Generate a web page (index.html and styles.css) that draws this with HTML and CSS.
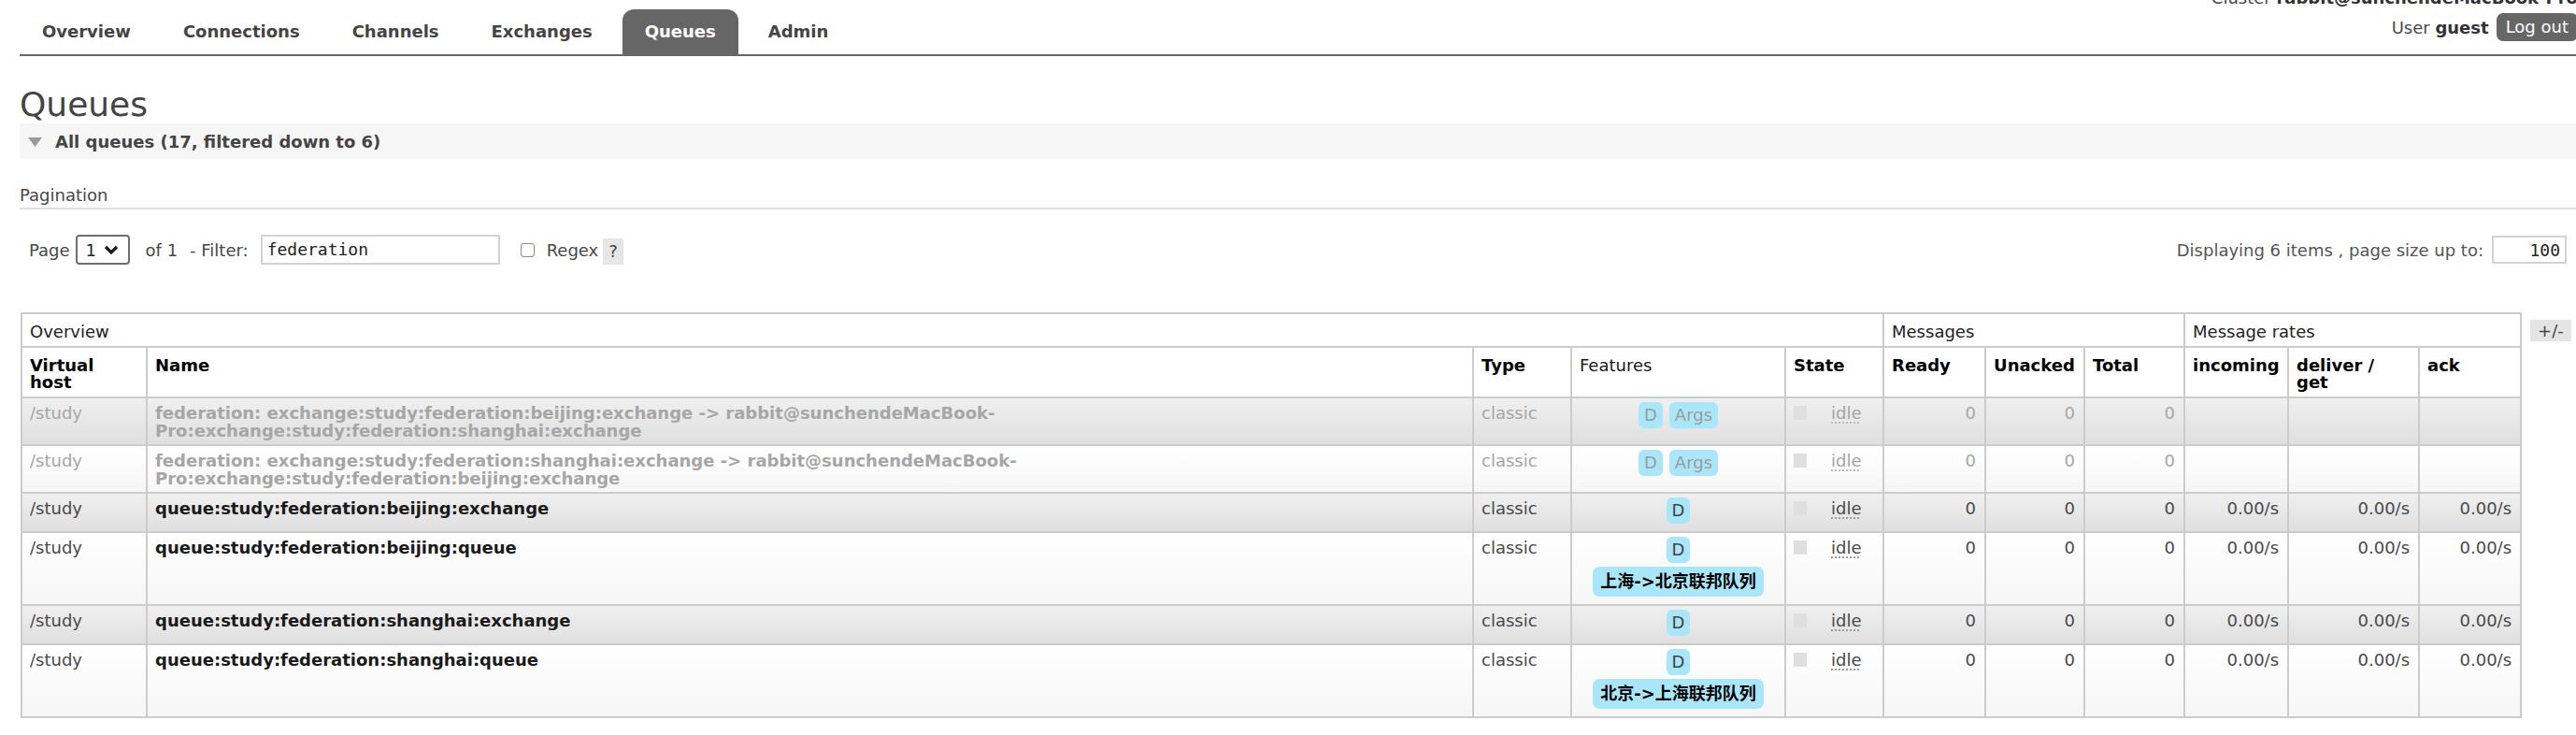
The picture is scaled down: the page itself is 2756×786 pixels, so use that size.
FILE: index.html
```html
<!DOCTYPE html>
<html lang="en">
<head>
<meta charset="utf-8">
<title>RabbitMQ Management: Queues</title>
<link rel="stylesheet" href="styles.css">
</head>
<body>
<div class="page">
  <header class="header">
    <nav class="menu">
      <a href="#">Overview</a>
      <a href="#">Connections</a>
      <a href="#">Channels</a>
      <a href="#">Exchanges</a>
      <a href="#" class="selected">Queues</a>
      <a href="#">Admin</a>
    </nav>
    <div class="topnav">
      <div class="cluster">Cluster <b>rabbit@sunchendeMacBook-Pro</b></div>
      <div class="user">User&nbsp;<b>guest</b><span class="logout">Log out</span></div>
    </div>
  </header>

  <h1 class="title">Queues</h1>

  <div class="section-head">
    <svg class="tri" width="15" height="10" viewBox="0 0 15 10"><polygon points="0,0 15,0 7.5,10" fill="#9a9a9a"/></svg>
    <span>All queues (17, filtered down to 6)</span>
  </div>

  <h3 class="pag-title">Pagination</h3>

  <div class="pager">
    <span class="lbl-page">Page</span>
    <span class="select"><span class="sel-val">1</span><svg width="16" height="11" viewBox="0 0 16 11"><polyline points="2,2 8,8 14,2" fill="none" stroke="#1a1a1a" stroke-width="3.2" stroke-linejoin="miter"/></svg></span>
    <span class="lbl-of">of 1</span>
    <span class="lbl-filter">- Filter:</span>
    <span class="input filter">federation</span>
    <span class="cb"></span>
    <span class="lbl-regex">Regex</span>
    <span class="help">?</span>
    <div class="pager-right">
      <span class="displaying">Displaying 6 items , page size up to:</span>
      <span class="input size">100</span>
    </div>
  </div>

  <table class="list">
    <colgroup>
      <col class="c-vhost"><col class="c-name"><col class="c-type"><col class="c-feat"><col class="c-state">
      <col class="c-ready"><col class="c-unacked"><col class="c-total">
      <col class="c-in"><col class="c-deliver"><col class="c-ack"><col class="c-pm">
    </colgroup>
    <thead>
      <tr>
        <th colspan="5" class="group">Overview</th>
        <th colspan="3" class="group">Messages</th>
        <th colspan="3" class="group">Message rates</th>
        <th class="plus-minus"><span class="pm">+/-</span></th>
      </tr>
      <tr>
        <th class="b">Virtual<br>host</th>
        <th class="b">Name</th>
        <th class="b">Type</th>
        <th>Features</th>
        <th class="b">State</th>
        <th class="b">Ready</th>
        <th class="b">Unacked</th>
        <th class="b">Total</th>
        <th class="b">incoming</th>
        <th class="b">deliver /<br>get</th>
        <th class="b">ack</th>
      </tr>
    </thead>
    <tbody>
      <tr class="alt1 muted">
        <td>/study</td>
        <td class="name">federation: exchange:study:federation:beijing:exchange -&gt; rabbit@sunchendeMacBook-<br>Pro:exchange:study:federation:shanghai:exchange</td>
        <td>classic</td>
        <td class="feat"><div class="badges"><span class="badge">D</span><span class="badge">Args</span></div></td>
        <td><div class="state"><span class="sq"></span><span class="idle">idle</span></div></td>
        <td class="r">0</td><td class="r">0</td><td class="r">0</td>
        <td class="r"></td><td class="r"></td><td class="r"></td>
      </tr>
      <tr class="alt2 muted">
        <td>/study</td>
        <td class="name">federation: exchange:study:federation:shanghai:exchange -&gt; rabbit@sunchendeMacBook-<br>Pro:exchange:study:federation:beijing:exchange</td>
        <td>classic</td>
        <td class="feat"><div class="badges"><span class="badge">D</span><span class="badge">Args</span></div></td>
        <td><div class="state"><span class="sq"></span><span class="idle">idle</span></div></td>
        <td class="r">0</td><td class="r">0</td><td class="r">0</td>
        <td class="r"></td><td class="r"></td><td class="r"></td>
      </tr>
      <tr class="alt1">
        <td>/study</td>
        <td class="name">queue:study:federation:beijing:exchange</td>
        <td>classic</td>
        <td class="feat"><div class="badges"><span class="badge">D</span></div></td>
        <td><div class="state"><span class="sq"></span><span class="idle">idle</span></div></td>
        <td class="r">0</td><td class="r">0</td><td class="r">0</td>
        <td class="r">0.00/s</td><td class="r">0.00/s</td><td class="r">0.00/s</td>
      </tr>
      <tr class="alt2">
        <td>/study</td>
        <td class="name">queue:study:federation:beijing:queue</td>
        <td>classic</td>
        <td class="feat"><div class="badges"><span class="badge">D</span></div><div class="labels"><span class="label">上海-&gt;北京联邦队列</span></div></td>
        <td><div class="state"><span class="sq"></span><span class="idle">idle</span></div></td>
        <td class="r">0</td><td class="r">0</td><td class="r">0</td>
        <td class="r">0.00/s</td><td class="r">0.00/s</td><td class="r">0.00/s</td>
      </tr>
      <tr class="alt1">
        <td>/study</td>
        <td class="name">queue:study:federation:shanghai:exchange</td>
        <td>classic</td>
        <td class="feat"><div class="badges"><span class="badge">D</span></div></td>
        <td><div class="state"><span class="sq"></span><span class="idle">idle</span></div></td>
        <td class="r">0</td><td class="r">0</td><td class="r">0</td>
        <td class="r">0.00/s</td><td class="r">0.00/s</td><td class="r">0.00/s</td>
      </tr>
      <tr class="alt2">
        <td>/study</td>
        <td class="name">queue:study:federation:shanghai:queue</td>
        <td>classic</td>
        <td class="feat"><div class="badges"><span class="badge">D</span></div><div class="labels"><span class="label">北京-&gt;上海联邦队列</span></div></td>
        <td><div class="state"><span class="sq"></span><span class="idle">idle</span></div></td>
        <td class="r">0</td><td class="r">0</td><td class="r">0</td>
        <td class="r">0.00/s</td><td class="r">0.00/s</td><td class="r">0.00/s</td>
      </tr>
    </tbody>
  </table>
</div>
</body>
</html>
```

FILE: styles.css
```css
html, body {
  margin: 0;
  padding: 0;
  overflow: hidden;
  background: #fff;
}
body {
  width: 2756px;
  font-family: "DejaVu Sans", Verdana, sans-serif;
  font-size: 18px;
  line-height: 21px;
  color: #484848;
}
.page {
  padding: 0 8px 0 21px;
}

/* header */
.header {
  display: flex;
  align-items: flex-start;
  justify-content: space-between;
  border-bottom: 2px solid #666;
  margin-right: -8px;
}
.menu {
  display: flex;
  padding-top: 10px;
}
.menu a {
  display: block;
  padding: 13px 24px;
  line-height: 22px;
  margin-right: 8px;
  font-weight: bold;
  color: #444;
  text-decoration: none;
}
.menu a.selected {
  background: #666;
  color: #fff;
  border-radius: 12px 12px 0 0;
}
.topnav {
  margin-top: -13px;
  margin-right: -2px;
  display: flex;
  flex-direction: column;
  align-items: flex-end;
  color: #484848;
}
.cluster {
  line-height: 21px;
  margin-bottom: 6px;
  white-space: nowrap;
}
.cluster b, .user b {
  color: #333;
}
.user {
  display: flex;
  align-items: center;
  white-space: nowrap;
}
.logout {
  display: inline-block;
  margin-left: 8px;
  padding: 4px 10px 5px;
  line-height: 21px;
  background: #666;
  color: #fff;
  border-radius: 7px;
}

/* title + section */
.title {
  margin: 32px 0 0;
  font-size: 36px;
  line-height: 40px;
  font-weight: normal;
  color: #444;
}
.section-head {
  display: flex;
  align-items: center;
  margin-right: -8px;
  padding: 9px 0 8px;
  background: #f6f6f6;
  font-weight: bold;
  color: #444;
}
.section-head .tri {
  margin: 0 14px 0 9px;
}
.pag-title {
  margin: 28px -8px 0 0;
  padding-bottom: 3px;
  border-bottom: 2px solid #dfdfdf;
  font-size: 18px;
  font-weight: normal;
  line-height: 21px;
  color: #484848;
}

/* pager */
.pager {
  display: flex;
  align-items: center;
  margin-top: 27px;
  height: 32px;
}
.lbl-page { margin-left: 10px; }
.select {
  box-sizing: border-box;
  display: flex;
  align-items: center;
  margin-left: 6px;
  width: 58px;
  height: 32px;
  border: 2px solid #6e6e6e;
  border-radius: 4px;
  padding-left: 9px;
  color: #222;
}
.select svg { margin-left: 8px; }
.lbl-of { margin-left: 17px; }
.lbl-filter { margin-left: 13px; }
.input {
  box-sizing: border-box;
  height: 32px;
  border: 2px solid #d2d2d2;
  font-family: "DejaVu Sans Mono", "Liberation Mono", monospace;
  font-size: 18px;
  line-height: 28px;
  color: #222;
}
.filter {
  margin-left: 13px;
  width: 256px;
  padding-left: 5px;
}
.cb {
  box-sizing: border-box;
  margin-left: 22px;
  width: 15px;
  height: 15px;
  border: 1.5px solid #8a8a8a;
  border-radius: 3px;
  background: #fff;
}
.lbl-regex { margin-left: 13px; }
.help {
  margin-left: 5px;
  padding: 0 6px;
  height: 28px;
  line-height: 28px;
  background: #e6e6e6;
  color: #444;
  align-self: flex-end;
}
.pager-right {
  display: flex;
  align-items: center;
  margin-left: auto;
  margin-right: 2px;
}
.displaying { color: #555; }
.size {
  margin-left: 9px;
  width: 80px;
  height: 30px;
  text-align: right;
  padding-right: 5px;
}

/* table */
.list {
  border-collapse: collapse;
  table-layout: fixed;
  width: 2726px;
  margin: 51px 0 0 1px;
}
.c-vhost { width: 134px; }
.c-name { width: 1419px; }
.c-type { width: 105px; }
.c-feat { width: 229px; }
.c-state { width: 105px; }
.c-ready { width: 109px; }
.c-unacked { width: 106px; }
.c-total { width: 107px; }
.c-in { width: 111px; }
.c-deliver { width: 140px; }
.c-ack { width: 109px; }
.c-pm { width: 52px; }

.list th, .list td {
  border: 2px solid #cccccc;
  vertical-align: top;
  text-align: left;
}
.list th {
  padding: 10px 8px 6px;
  line-height: 18px;
  font-weight: normal;
  color: #1a1a1a;
  background: #fff;
}
.list th.b {
  font-weight: bold;
  color: #000;
}
.list th.group { color: #222; }
.list th.plus-minus {
  border: none;
  padding-left: 9px;
}
.pm {
  padding: 1px 8px;
  background: #e4e4e4;
  color: #444;
}
.list td {
  padding: 6px 8px 5px;
  line-height: 19px;
  color: #4a4a4a;
}
.list td.name {
  font-weight: bold;
  color: #1a1a1a;
  white-space: nowrap;
}
.list td.r {
  text-align: right;
  padding-right: 9px;
}
.alt1 { background: linear-gradient(#f0f0f0, #dfdfdf); }
.alt2 { background: linear-gradient(#ffffff, #f6f6f6); }

.list td.feat {
  padding: 4px 8px 8px;
  text-align: center;
}
.badges {
  display: flex;
  justify-content: center;
  gap: 7px;
}
.badge {
  display: inline-block;
  padding: 5px 6px;
  line-height: 18px;
  border-radius: 6px;
  background: #aae6fa;
  color: #444;
}
.labels {
  margin-top: 4px;
  display: flex;
  justify-content: center;
}
.label {
  display: inline-block;
  padding: 5px 8px;
  font-family: "DejaVu Sans", "Noto Sans CJK SC", sans-serif;
  font-size: 18px;
  line-height: 22px;
  font-weight: bold;
  border-radius: 7px;
  background: #aae6fa;
  color: #000;
}
.state {
  display: flex;
  align-items: flex-start;
}
.sq {
  width: 14px;
  height: 15px;
  margin-top: 2px;
  background: #dfdfdf;
}
.idle {
  margin-left: 26px;
  text-decoration: underline dotted #999;
  text-decoration-thickness: 2px;
  text-underline-offset: 3px;
}

/* muted (internal federation) rows */
.muted td, .muted td.name { color: #a6a6a6; }
.muted .badge { color: #9c9c9c; }
.muted .idle { text-decoration-color: #bbb; }
```
